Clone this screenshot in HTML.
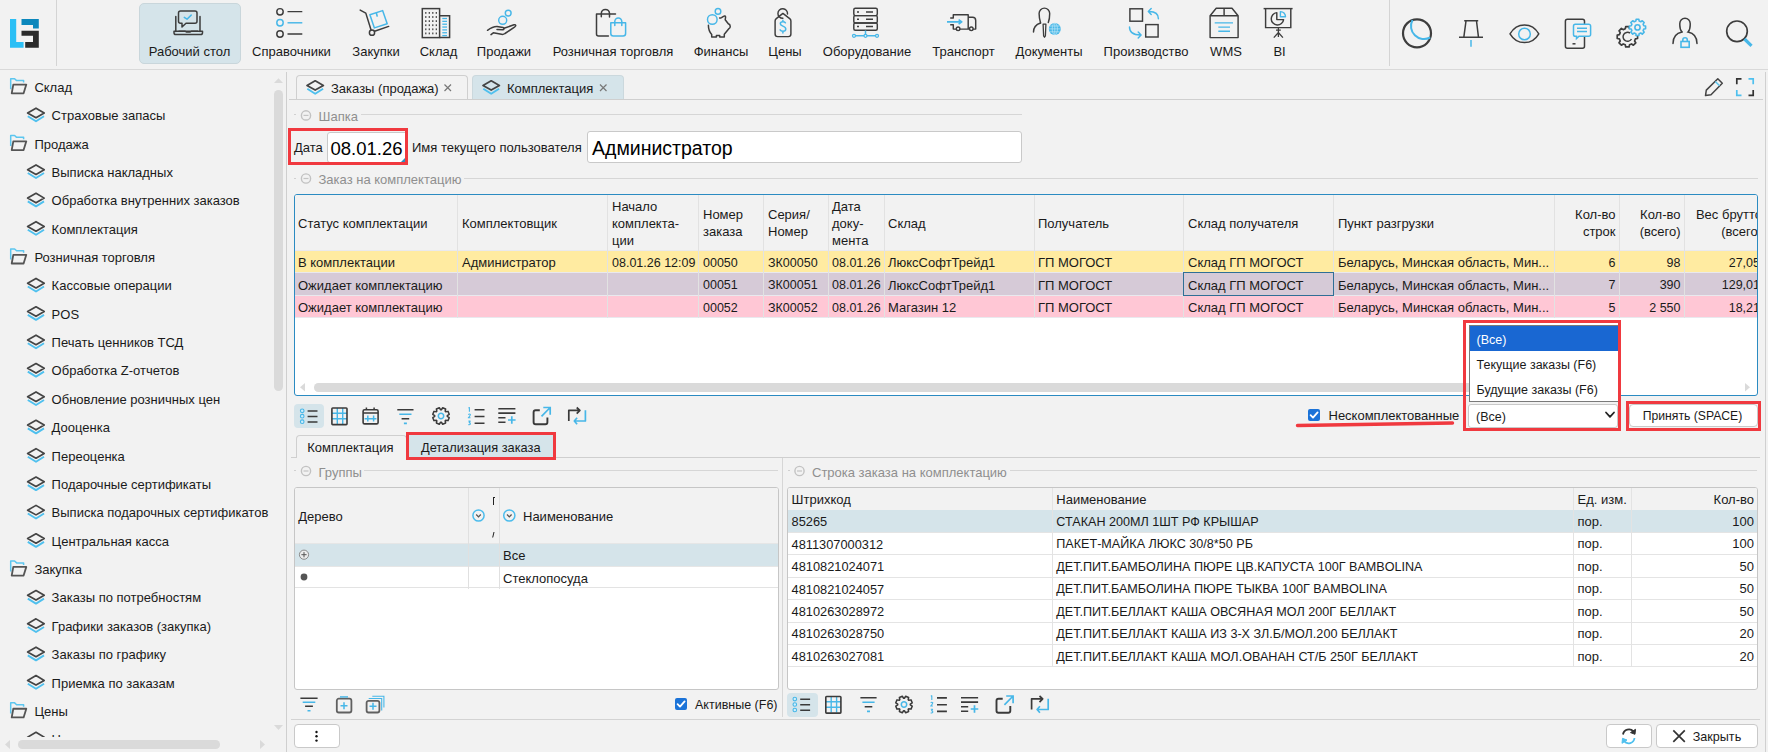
<!DOCTYPE html>
<html><head><meta charset="utf-8"><style>
html,body{margin:0;padding:0;}
body{width:1768px;height:752px;overflow:hidden;background:#f2f2f2;position:relative;font-family:"Liberation Sans", sans-serif;}
.t{position:absolute;white-space:nowrap;}
.b{position:absolute;box-sizing:border-box;}
svg.b{overflow:visible;}
</style></head><body>
<svg class="b" style="left:10px;top:19px" width="29" height="29" viewBox="0 0 29 29" fill="none">
<path d="M0 0H6.2V23H13.6V28.8H0Z" fill="#2bbff5"/>
<path d="M11.5 0H28.8V9.6H23V5.9H11.5Z" fill="#0b87bc"/>
<path d="M11.5 11.8H28.8V28.8H15.2V23H23V16.8H11.5Z" fill="#2b2b2b"/>
</svg>
<div class="b" style="left:56px;top:0px;width:1px;height:66px;background:#d4d4d4"></div>
<div class="b" style="left:1389px;top:0px;width:1px;height:66px;background:#d4d4d4"></div>
<div class="b" style="left:0px;top:69px;width:1768px;height:1px;background:#d9d9d9"></div>
<div class="b" style="left:139px;top:3px;width:102px;height:61px;background:#d5e4ea;border:1px solid #c9d6db;border-radius:5px"></div>
<div class="t" style="top:44.07px;font-size:13px;line-height:16.25px;color:#1a1a1a;left:109.5px;width:160px;text-align:center;">Рабочий стол</div>
<div class="t" style="top:44.07px;font-size:13px;line-height:16.25px;color:#1a1a1a;left:211.5px;width:160px;text-align:center;">Справочники</div>
<div class="t" style="top:44.07px;font-size:13px;line-height:16.25px;color:#1a1a1a;left:296.0px;width:160px;text-align:center;">Закупки</div>
<div class="t" style="top:44.07px;font-size:13px;line-height:16.25px;color:#1a1a1a;left:358.5px;width:160px;text-align:center;">Склад</div>
<div class="t" style="top:44.07px;font-size:13px;line-height:16.25px;color:#1a1a1a;left:424.0px;width:160px;text-align:center;">Продажи</div>
<div class="t" style="top:44.07px;font-size:13px;line-height:16.25px;color:#1a1a1a;left:533.0px;width:160px;text-align:center;">Розничная торговля</div>
<div class="t" style="top:44.07px;font-size:13px;line-height:16.25px;color:#1a1a1a;left:641.0px;width:160px;text-align:center;">Финансы</div>
<div class="t" style="top:44.07px;font-size:13px;line-height:16.25px;color:#1a1a1a;left:705.0px;width:160px;text-align:center;">Цены</div>
<div class="t" style="top:44.07px;font-size:13px;line-height:16.25px;color:#1a1a1a;left:787.0px;width:160px;text-align:center;">Оборудование</div>
<div class="t" style="top:44.07px;font-size:13px;line-height:16.25px;color:#1a1a1a;left:883.5px;width:160px;text-align:center;">Транспорт</div>
<div class="t" style="top:44.07px;font-size:13px;line-height:16.25px;color:#1a1a1a;left:969.0px;width:160px;text-align:center;">Документы</div>
<div class="t" style="top:44.07px;font-size:13px;line-height:16.25px;color:#1a1a1a;left:1066.0px;width:160px;text-align:center;">Производство</div>
<div class="t" style="top:44.07px;font-size:13px;line-height:16.25px;color:#1a1a1a;left:1146.0px;width:160px;text-align:center;">WMS</div>
<div class="t" style="top:44.07px;font-size:13px;line-height:16.25px;color:#1a1a1a;left:1199.6px;width:160px;text-align:center;">BI</div>
<svg class="b" style="left:0px;top:0px" width="1" height="1" viewBox="0 0 1 1" fill="none">
<path d="M175.8 16.5V31.5 M200 16.5V31.5" stroke="#3d3d3d" stroke-width="1.5" stroke-linecap="round" stroke-linejoin="round"/>
<path d="M174 31.2H202.5V32.8A1.8 1.8 0 0 1 200.7 34.6H175.8A1.8 1.8 0 0 1 174 32.8Z" stroke="#3d3d3d" stroke-width="1.5" stroke-linecap="round" stroke-linejoin="round"/>
<path d="M178.5 31.1H185L186.5 32H190L191.5 31.1H198" stroke="#3d3d3d" stroke-width="1.4"/>
<path d="M180.5 11H195A2 2 0 0 1 197 13V21.3A2 2 0 0 1 195 23.3H186L182 27V23.3H180.5A2 2 0 0 1 178.5 21.3V13A2 2 0 0 1 180.5 11Z" stroke="#3d3d3d" stroke-width="1.5" stroke-linecap="round" stroke-linejoin="round"/>
<path d="M184.3 17.4L187 19.2L191.2 15.1" stroke="#47b7e8" stroke-width="1.5" stroke-linecap="round" stroke-linejoin="round"/>
</svg>
<svg class="b" style="left:0px;top:0px" width="1" height="1" viewBox="0 0 1 1" fill="none">
<circle cx="280" cy="11.8" r="3.2" stroke="#3d3d3d" stroke-width="1.45"/>
<circle cx="280" cy="22.8" r="3.2" stroke="#47b7e8" stroke-width="1.45"/>
<circle cx="280" cy="34" r="3.2" stroke="#3d3d3d" stroke-width="1.45"/>
<path d="M287.5 11.6H302.3M287.5 34H302.3" stroke="#3d3d3d" stroke-width="1.45"/>
<path d="M287.5 22.8H302.3" stroke="#47b7e8" stroke-width="1.45"/>
</svg>
<svg class="b" style="left:0px;top:0px" width="1" height="1" viewBox="0 0 1 1" fill="none">
<path d="M360.2 10.1L365.8 13.1L371 29.8" stroke="#3d3d3d" stroke-width="1.5" stroke-linecap="round" stroke-linejoin="round"/>
<circle cx="372" cy="32.7" r="2.6" stroke="#3d3d3d" stroke-width="1.5"/>
<path d="M374.6 31.3L388.7 26.4" stroke="#3d3d3d" stroke-width="1.5" stroke-linecap="round" stroke-linejoin="round"/>
<path d="M369.9 14.7L382.6 10.6L387.2 23.8L374.4 27.9Z" stroke="#47b7e8" stroke-width="1.5" stroke-linejoin="round"/>
<path d="M376.3 12.7L377.3 16.6" stroke="#47b7e8" stroke-width="1.6"/>
</svg>
<svg class="b" style="left:0px;top:0px" width="1" height="1" viewBox="0 0 1 1" fill="none">
<rect x="422.3" y="8.6" width="17.3" height="29" stroke="#3d3d3d" stroke-width="1.5"/>
<path d="M439.6 15.7H449.6V37.6H439.6" stroke="#3d3d3d" stroke-width="1.5"/>
<rect x="425.2" y="12.0" width="1.2" height="1.8" fill="#3d3d3d"/><rect x="428.7" y="12.0" width="1.2" height="1.8" fill="#3d3d3d"/><rect x="432.2" y="12.0" width="1.2" height="1.8" fill="#3d3d3d"/><rect x="435.7" y="12.0" width="1.2" height="1.8" fill="#3d3d3d"/><rect x="425.2" y="16.1" width="1.2" height="1.8" fill="#3d3d3d"/><rect x="428.7" y="16.1" width="1.2" height="1.8" fill="#3d3d3d"/><rect x="432.2" y="16.1" width="1.2" height="1.8" fill="#3d3d3d"/><rect x="435.7" y="16.1" width="1.2" height="1.8" fill="#3d3d3d"/><rect x="425.2" y="20.2" width="1.2" height="1.8" fill="#3d3d3d"/><rect x="428.7" y="20.2" width="1.2" height="1.8" fill="#3d3d3d"/><rect x="432.2" y="20.2" width="1.2" height="1.8" fill="#3d3d3d"/><rect x="435.7" y="20.2" width="1.2" height="1.8" fill="#3d3d3d"/><rect x="425.2" y="24.3" width="1.2" height="1.8" fill="#3d3d3d"/><rect x="428.7" y="24.3" width="1.2" height="1.8" fill="#3d3d3d"/><rect x="432.2" y="24.3" width="1.2" height="1.8" fill="#3d3d3d"/><rect x="435.7" y="24.3" width="1.2" height="1.8" fill="#3d3d3d"/><rect x="425.2" y="28.4" width="1.2" height="1.8" fill="#3d3d3d"/><rect x="428.7" y="28.4" width="1.2" height="1.8" fill="#3d3d3d"/><rect x="432.2" y="28.4" width="1.2" height="1.8" fill="#3d3d3d"/><rect x="435.7" y="28.4" width="1.2" height="1.8" fill="#3d3d3d"/><rect x="425.2" y="32.5" width="1.2" height="1.8" fill="#3d3d3d"/><rect x="428.7" y="32.5" width="1.2" height="1.8" fill="#3d3d3d"/><rect x="432.2" y="32.5" width="1.2" height="1.8" fill="#3d3d3d"/><rect x="435.7" y="32.5" width="1.2" height="1.8" fill="#3d3d3d"/><path d="M442.3 18.50H447" stroke="#47b7e8" stroke-width="1.3"/><path d="M442.3 21.35H447" stroke="#47b7e8" stroke-width="1.3"/><path d="M442.3 24.20H447" stroke="#47b7e8" stroke-width="1.3"/><path d="M442.3 27.05H447" stroke="#47b7e8" stroke-width="1.3"/><path d="M442.3 29.90H447" stroke="#47b7e8" stroke-width="1.3"/><path d="M442.3 32.75H447" stroke="#47b7e8" stroke-width="1.3"/><path d="M442.3 35.60H447" stroke="#47b7e8" stroke-width="1.3"/>
</svg>
<svg class="b" style="left:0px;top:0px" width="1" height="1" viewBox="0 0 1 1" fill="none">
<circle cx="502.7" cy="20.3" r="4" stroke="#47b7e8" stroke-width="1.45"/>
<circle cx="508.2" cy="13.1" r="2.9" stroke="#47b7e8" stroke-width="1.45"/>
<path d="M487.5 30.3C490 28.5 493 26.5 497 26.6L503 27.5C504.5 28 504.3 29.8 502.6 29.8L497 29.5" stroke="#3d3d3d" stroke-width="1.5" stroke-linecap="round" stroke-linejoin="round"/>
<path d="M491 34.6L493.3 32.8L501.5 34.3C503 34.6 504 34.2 505 33.5L514.5 27.2C516.5 25.8 516 24.5 514 24.8L504 28.3" stroke="#3d3d3d" stroke-width="1.5" stroke-linecap="round" stroke-linejoin="round"/>
</svg>
<svg class="b" style="left:0px;top:0px" width="1" height="1" viewBox="0 0 1 1" fill="none">
<path d="M608.4 35.9H598.5A2 2 0 0 1 596.5 33.9V13.9H615.5" stroke="#3d3d3d" stroke-width="1.5" stroke-linecap="round" stroke-linejoin="round"/>
<path d="M601.3 16.8V13.5A4.1 4.1 0 0 1 609.5 13.5V17" stroke="#3d3d3d" stroke-width="1.5" stroke-linecap="round" stroke-linejoin="round"/>
<path d="M610.8 22.8H625.6V33.6A2.5 2.5 0 0 1 623.1 36.1H613.3A2.5 2.5 0 0 1 610.8 33.6Z" stroke="#47b7e8" stroke-width="1.5" stroke-linecap="round" stroke-linejoin="round"/>
<path d="M614.8 25.5V21.5A3.5 3.5 0 0 1 621.8 21.5V25.5" stroke="#47b7e8" stroke-width="1.5" stroke-linecap="round" stroke-linejoin="round"/>
</svg>
<svg class="b" style="left:0px;top:0px" width="1" height="1" viewBox="0 0 1 1" fill="none">
<circle cx="712.3" cy="19.5" r="4.8" stroke="#47b7e8" stroke-width="1.45"/>
<circle cx="718" cy="11.4" r="2.8" stroke="#47b7e8" stroke-width="1.45"/>
<path d="M708.4 25.2C708.4 29 709.5 32 711.7 34.5V37.1H716.4V35.5H719.7V37.1H724.3V34.3L728.8 28.8C730.8 28 730.8 24.5 728.3 23.8L725.2 19.8L725.6 17C725.5 16 724.5 15.8 723.5 16.3L721.5 17.6C720.8 18 720 18 719.6 18" stroke="#3d3d3d" stroke-width="1.5" stroke-linejoin="round" stroke-linecap="round"/>
</svg>
<svg class="b" style="left:0px;top:0px" width="1" height="1" viewBox="0 0 1 1" fill="none">
<path d="M782.9 13.4L776.3 18.6Q775.1 19.6 775.1 21V34A2.6 2.6 0 0 0 777.7 36.6H788.3A2.6 2.6 0 0 0 790.9 34V21Q790.9 19.6 789.7 18.6Z" stroke="#3d3d3d" stroke-width="1.45" stroke-linejoin="round"/>
<path d="M787.5 14A4.8 4.8 0 1 0 782.9 18.3" stroke="#3d3d3d" stroke-width="1.45" stroke-linecap="round"/>
<path d="M785.4 22.8C784.9 22 784 21.7 783 21.7C781.5 21.7 780.3 22.4 780.3 23.8C780.3 26.7 785.8 25.6 785.8 29C785.8 30.4 784.5 31.3 782.9 31.3C781.5 31.3 780.6 30.8 780.1 29.9M782.9 20.2V21.7M782.9 31.3V33" stroke="#47b7e8" stroke-width="1.5" stroke-linecap="round"/>
</svg>
<svg class="b" style="left:0px;top:0px" width="1" height="1" viewBox="0 0 1 1" fill="none">
<rect x="853.8" y="8.3" width="23.5" height="7.3" rx="1.5" stroke="#3d3d3d" stroke-width="1.45"/>
<rect x="853.8" y="15.6" width="23.5" height="7.3" rx="1.5" stroke="#3d3d3d" stroke-width="1.45"/>
<rect x="853.8" y="22.9" width="23.5" height="7.3" rx="1.5" stroke="#3d3d3d" stroke-width="1.45"/>
<path d="M857 12H859M857 19.3H859M857 26.6H859M866 12H873M866 19.3H873M866 26.6H873" stroke="#3d3d3d" stroke-width="1.5"/>
<path d="M865.5 30.5V35.8M855 35.8H876" stroke="#47b7e8" stroke-width="1.5"/>
<circle cx="854" cy="35.8" r="1.5" stroke="#47b7e8" stroke-width="1.3" fill="#f2f2f2"/>
<circle cx="865.5" cy="35.8" r="1.5" stroke="#47b7e8" stroke-width="1.3" fill="#f2f2f2"/>
<circle cx="877" cy="35.8" r="1.5" stroke="#47b7e8" stroke-width="1.3" fill="#f2f2f2"/>
</svg>
<svg class="b" style="left:0px;top:0px" width="1" height="1" viewBox="0 0 1 1" fill="none">
<path d="M950.2 17.9H953.3V14.8H968.2V29.1M950.2 24.8H953.3V29.1H956.3M960 29.1H969.5M973 29.1H975.7V20.4Q975.7 17.3 972.5 17.3H968.2" stroke="#3d3d3d" stroke-width="1.45" stroke-linejoin="round"/>
<circle cx="958.1" cy="28.8" r="1.8" stroke="#3d3d3d" stroke-width="1.4"/>
<circle cx="971.3" cy="28.8" r="1.8" stroke="#3d3d3d" stroke-width="1.4"/>
<path d="M947 21.9H961M958.6 19.6L961.8 21.9L958.6 24.2" stroke="#47b7e8" stroke-width="1.6" stroke-linejoin="round"/>
</svg>
<svg class="b" style="left:0px;top:0px" width="1" height="1" viewBox="0 0 1 1" fill="none">
<path d="M1040.6 23C1039.6 20 1039.1 17 1039.1 13.5A5.3 5.4 0 0 1 1049.7 13.5C1049.7 17 1049.3 20 1048.3 22.5" stroke="#3d3d3d" stroke-width="1.45" stroke-linecap="round"/>
<path d="M1040.5 23C1036 24.5 1033.5 27.5 1033.5 32" stroke="#3d3d3d" stroke-width="1.45" stroke-linecap="round"/>
<path d="M1043.1 24.2H1045.9L1045.4 35.8L1044.5 37.2L1043.6 35.8Z" stroke="#3d3d3d" stroke-width="1.3" stroke-linejoin="round"/>
<circle cx="1054.8" cy="28.9" r="6" fill="#47b7e8"/>
<path d="M1049 28.9H1060.6M1050 26H1059.6M1050 31.8H1059.6M1054.8 23V34.8" stroke="#bfe6f7" stroke-width="0.7"/>
<ellipse cx="1054.8" cy="28.9" rx="2.6" ry="5.9" stroke="#bfe6f7" stroke-width="0.7"/>
</svg>
<svg class="b" style="left:0px;top:0px" width="1" height="1" viewBox="0 0 1 1" fill="none">
<rect x="1129.9" y="8.8" width="12.6" height="12.4" stroke="#3d3d3d" stroke-width="1.45"/>
<rect x="1145.7" y="24.6" width="12.4" height="12.4" stroke="#3d3d3d" stroke-width="1.45"/>
<path d="M1158.4 18.8C1158.4 14 1155.5 11.5 1149.3 11.5M1151.2 8.6L1148.3 11.5L1151.2 14.4" stroke="#47b7e8" stroke-width="1.45" stroke-linecap="round" stroke-linejoin="round"/>
<path d="M1129.5 27C1129.5 32 1132.5 35 1140.3 35M1138.2 32.1L1141.1 35L1138.2 37.9" stroke="#47b7e8" stroke-width="1.45" stroke-linecap="round" stroke-linejoin="round"/>
</svg>
<svg class="b" style="left:0px;top:0px" width="1" height="1" viewBox="0 0 1 1" fill="none">
<path d="M1216.2 8.3H1232L1238.1 15.7V37.6H1210.1V15.7Z M1210.1 15.7H1238.1 M1224.1 8.3V15.7" stroke="#3d3d3d" stroke-width="1.45" stroke-linejoin="round"/>
<path d="M1214.7 22.9H1233M1218.3 27.1H1230M1218.3 31.2H1230" stroke="#47b7e8" stroke-width="1.4"/>
</svg>
<svg class="b" style="left:0px;top:0px" width="1" height="1" viewBox="0 0 1 1" fill="none">
<path d="M1263.6 8.6H1292.6" stroke="#3d3d3d" stroke-width="1.45"/>
<path d="M1265.6 8.6V27.6H1290.8V8.6" stroke="#3d3d3d" stroke-width="1.45"/>
<path d="M1278.4 28V37.1M1273.8 37.6L1278.4 32.5L1282.9 37.6M1276 30.2H1280.8" stroke="#3d3d3d" stroke-width="1.3"/>
<path d="M1276.8 12.6A6.2 6.2 0 1 0 1283.6 19.6H1276.8Z" stroke="#3d3d3d" stroke-width="1.45" stroke-linejoin="round"/>
<path d="M1280.4 11.6A5 5 0 0 1 1285.5 16.7H1280.4Z" stroke="#47b7e8" stroke-width="1.4" stroke-linejoin="round"/>
</svg>
<svg class="b" style="left:0px;top:0px" width="1" height="1" viewBox="0 0 1 1" fill="none">
<circle cx="1417" cy="33.3" r="14" stroke="#3d3d3d" stroke-width="2.2"/>
<path d="M1412.5 20A13 13 0 0 0 1430.2 37.5" stroke="#47b7e8" stroke-width="2"/>
</svg>
<svg class="b" style="left:0px;top:0px" width="1" height="1" viewBox="0 0 1 1" fill="none">
<path d="M1464.2 20.8H1478.2M1466 21L1463.8 37.3M1476.5 21L1478.5 37.3M1459 37.3H1483" stroke="#3d3d3d" stroke-width="1.5"/>
<path d="M1471 40V46.8" stroke="#47b7e8" stroke-width="1.5"/>
</svg>
<svg class="b" style="left:0px;top:0px" width="1" height="1" viewBox="0 0 1 1" fill="none">
<path d="M1510 33.8C1517 22 1532 22 1538.8 33.8C1532 45.5 1517 45.5 1510 33.8Z" stroke="#3d3d3d" stroke-width="1.5" stroke-linejoin="round"/>
<circle cx="1524.5" cy="34" r="5.8" stroke="#47b7e8" stroke-width="1.5"/>
</svg>
<svg class="b" style="left:0px;top:0px" width="1" height="1" viewBox="0 0 1 1" fill="none">
<rect x="1565.4" y="19.2" width="19.1" height="29" rx="2" stroke="#3d3d3d" stroke-width="1.5"/>
<path d="M1572.5 43.8H1575.5" stroke="#3d3d3d" stroke-width="1.5"/>
<path d="M1575.3 24.2H1588.8A1.8 1.8 0 0 1 1590.6 26V34.5A1.8 1.8 0 0 1 1588.8 36.3H1579L1576.5 38.6V36.3H1575.3A1.8 1.8 0 0 1 1573.5 34.5V26A1.8 1.8 0 0 1 1575.3 24.2Z" fill="#f2f2f2" stroke="#47b7e8" stroke-width="1.5"/>
<path d="M1577 28.2H1587M1577 31.5H1587" stroke="#47b7e8" stroke-width="1.4"/>
</svg>
<svg class="b" style="left:0px;top:0px" width="1" height="1" viewBox="0 0 1 1" fill="none"><polygon points="1637.56,35.11 1637.56,38.49 1635.42,38.93 1634.58,40.97 1635.78,42.79 1633.39,45.18 1631.57,43.98 1629.53,44.82 1629.09,46.96 1625.71,46.96 1625.27,44.82 1623.23,43.98 1621.41,45.18 1619.02,42.79 1620.22,40.97 1619.38,38.93 1617.24,38.49 1617.24,35.11 1619.38,34.67 1620.22,32.63 1619.02,30.81 1621.41,28.42 1623.23,29.62 1625.27,28.78 1625.71,26.64 1629.09,26.64 1629.53,28.78 1631.57,29.62 1633.39,28.42 1635.78,30.81 1634.58,32.63 1635.42,34.67" stroke="#3d3d3d" stroke-width="1.7" stroke-linejoin="round"/><path d="M1630 33A4.5 4.5 0 1 0 1631.5 39" stroke="#3d3d3d" stroke-width="1.5"/><circle cx="1637.5" cy="27.4" r="8.5" fill="#f2f2f2"/><polygon points="1645.59,26.05 1645.59,28.75 1643.78,29.07 1643.12,30.66 1644.17,32.17 1642.27,34.07 1640.76,33.02 1639.17,33.68 1638.85,35.49 1636.15,35.49 1635.83,33.68 1634.24,33.02 1632.73,34.07 1630.83,32.17 1631.88,30.66 1631.22,29.07 1629.41,28.75 1629.41,26.05 1631.22,25.73 1631.88,24.14 1630.83,22.63 1632.73,20.73 1634.24,21.78 1635.83,21.12 1636.15,19.31 1638.85,19.31 1639.17,21.12 1640.76,21.78 1642.27,20.73 1644.17,22.63 1643.12,24.14 1643.78,25.73" stroke="#47b7e8" stroke-width="1.6" stroke-linejoin="round"/><circle cx="1637.5" cy="27.4" r="2.6" stroke="#47b7e8" stroke-width="1.6"/></svg>
<svg class="b" style="left:0px;top:0px" width="1" height="1" viewBox="0 0 1 1" fill="none">
<path d="M1682 32C1680 30 1679.8 27 1679.8 25V23.5A5.2 5.2 0 0 1 1690.2 23.5V25C1690.2 27 1690 30 1688 32C1693 33 1697 35.5 1697 43.5" stroke="#3d3d3d" stroke-width="1.5" stroke-linecap="round"/>
<path d="M1682 32C1677 33 1673 35.5 1673 43.5" stroke="#3d3d3d" stroke-width="1.5" stroke-linecap="round"/>
<rect x="1681" y="41.5" width="8.2" height="5.8" stroke="#47b7e8" stroke-width="1.6"/>
<path d="M1682.8 41.5V40A2.2 2.2 0 0 1 1687.3 40V41.5" stroke="#47b7e8" stroke-width="1.6"/>
</svg>
<svg class="b" style="left:0px;top:0px" width="1" height="1" viewBox="0 0 1 1" fill="none">
<circle cx="1737" cy="31.3" r="10.3" stroke="#3d3d3d" stroke-width="1.7"/>
<path d="M1744.5 39L1751.5 45.8" stroke="#47b7e8" stroke-width="3.2"/>
</svg>
<div class="b" style="left:0;top:0;width:272px;height:737px;overflow:hidden">
<div class="t" style="top:79.77px;font-size:13px;line-height:16.25px;color:#1a1a1a;left:34.4px;">Склад</div>
<svg class="b" style="left:0px;top:0px" width="1" height="1" viewBox="0 0 1 1" fill="none"><g transform="translate(0,0.00)"><path d="M10.7 89.3V78.7H14.6L16.6 80.6H23.6V82.6" stroke="#5cc6ef" stroke-width="1.5" stroke-linejoin="round"/>
<path d="M13.3 84.6H26.3L23.6 93.3H11.7Z" stroke="#555" stroke-width="1.8" stroke-linejoin="round"/></g></svg>
<div class="t" style="top:108.14px;font-size:13px;line-height:16.25px;color:#1a1a1a;left:51.6px;">Страховые запасы</div>
<svg class="b" style="left:0px;top:0px" width="1" height="1" viewBox="0 0 1 1" fill="none"><g transform="translate(0,0.00)"><path d="M27.6 113L36 108.2L44.2 113L36 117.7Z" stroke="#444" stroke-width="1.7" stroke-linejoin="round"/>
<path d="M27.8 116.3L36 121.3L44 116.3" stroke="#4fc0ee" stroke-width="1.9" stroke-linejoin="round"/></g></svg>
<div class="t" style="top:136.51px;font-size:13px;line-height:16.25px;color:#1a1a1a;left:34.4px;">Продажа</div>
<svg class="b" style="left:0px;top:0px" width="1" height="1" viewBox="0 0 1 1" fill="none"><g transform="translate(0,56.74)"><path d="M10.7 89.3V78.7H14.6L16.6 80.6H23.6V82.6" stroke="#5cc6ef" stroke-width="1.5" stroke-linejoin="round"/>
<path d="M13.3 84.6H26.3L23.6 93.3H11.7Z" stroke="#555" stroke-width="1.8" stroke-linejoin="round"/></g></svg>
<div class="t" style="top:164.88px;font-size:13px;line-height:16.25px;color:#1a1a1a;left:51.6px;">Выписка накладных</div>
<svg class="b" style="left:0px;top:0px" width="1" height="1" viewBox="0 0 1 1" fill="none"><g transform="translate(0,56.74)"><path d="M27.6 113L36 108.2L44.2 113L36 117.7Z" stroke="#444" stroke-width="1.7" stroke-linejoin="round"/>
<path d="M27.8 116.3L36 121.3L44 116.3" stroke="#4fc0ee" stroke-width="1.9" stroke-linejoin="round"/></g></svg>
<div class="t" style="top:193.25px;font-size:13px;line-height:16.25px;color:#1a1a1a;left:51.6px;">Обработка внутренних заказов</div>
<svg class="b" style="left:0px;top:0px" width="1" height="1" viewBox="0 0 1 1" fill="none"><g transform="translate(0,85.11)"><path d="M27.6 113L36 108.2L44.2 113L36 117.7Z" stroke="#444" stroke-width="1.7" stroke-linejoin="round"/>
<path d="M27.8 116.3L36 121.3L44 116.3" stroke="#4fc0ee" stroke-width="1.9" stroke-linejoin="round"/></g></svg>
<div class="t" style="top:221.62px;font-size:13px;line-height:16.25px;color:#1a1a1a;left:51.6px;">Комплектация</div>
<svg class="b" style="left:0px;top:0px" width="1" height="1" viewBox="0 0 1 1" fill="none"><g transform="translate(0,113.48)"><path d="M27.6 113L36 108.2L44.2 113L36 117.7Z" stroke="#444" stroke-width="1.7" stroke-linejoin="round"/>
<path d="M27.8 116.3L36 121.3L44 116.3" stroke="#4fc0ee" stroke-width="1.9" stroke-linejoin="round"/></g></svg>
<div class="t" style="top:249.99px;font-size:13px;line-height:16.25px;color:#1a1a1a;left:34.4px;">Розничная торговля</div>
<svg class="b" style="left:0px;top:0px" width="1" height="1" viewBox="0 0 1 1" fill="none"><g transform="translate(0,170.22)"><path d="M10.7 89.3V78.7H14.6L16.6 80.6H23.6V82.6" stroke="#5cc6ef" stroke-width="1.5" stroke-linejoin="round"/>
<path d="M13.3 84.6H26.3L23.6 93.3H11.7Z" stroke="#555" stroke-width="1.8" stroke-linejoin="round"/></g></svg>
<div class="t" style="top:278.36px;font-size:13px;line-height:16.25px;color:#1a1a1a;left:51.6px;">Кассовые операции</div>
<svg class="b" style="left:0px;top:0px" width="1" height="1" viewBox="0 0 1 1" fill="none"><g transform="translate(0,170.22)"><path d="M27.6 113L36 108.2L44.2 113L36 117.7Z" stroke="#444" stroke-width="1.7" stroke-linejoin="round"/>
<path d="M27.8 116.3L36 121.3L44 116.3" stroke="#4fc0ee" stroke-width="1.9" stroke-linejoin="round"/></g></svg>
<div class="t" style="top:306.73px;font-size:13px;line-height:16.25px;color:#1a1a1a;left:51.6px;">POS</div>
<svg class="b" style="left:0px;top:0px" width="1" height="1" viewBox="0 0 1 1" fill="none"><g transform="translate(0,198.59)"><path d="M27.6 113L36 108.2L44.2 113L36 117.7Z" stroke="#444" stroke-width="1.7" stroke-linejoin="round"/>
<path d="M27.8 116.3L36 121.3L44 116.3" stroke="#4fc0ee" stroke-width="1.9" stroke-linejoin="round"/></g></svg>
<div class="t" style="top:335.10px;font-size:13px;line-height:16.25px;color:#1a1a1a;left:51.6px;">Печать ценников ТСД</div>
<svg class="b" style="left:0px;top:0px" width="1" height="1" viewBox="0 0 1 1" fill="none"><g transform="translate(0,226.96)"><path d="M27.6 113L36 108.2L44.2 113L36 117.7Z" stroke="#444" stroke-width="1.7" stroke-linejoin="round"/>
<path d="M27.8 116.3L36 121.3L44 116.3" stroke="#4fc0ee" stroke-width="1.9" stroke-linejoin="round"/></g></svg>
<div class="t" style="top:363.47px;font-size:13px;line-height:16.25px;color:#1a1a1a;left:51.6px;">Обработка Z-отчетов</div>
<svg class="b" style="left:0px;top:0px" width="1" height="1" viewBox="0 0 1 1" fill="none"><g transform="translate(0,255.33)"><path d="M27.6 113L36 108.2L44.2 113L36 117.7Z" stroke="#444" stroke-width="1.7" stroke-linejoin="round"/>
<path d="M27.8 116.3L36 121.3L44 116.3" stroke="#4fc0ee" stroke-width="1.9" stroke-linejoin="round"/></g></svg>
<div class="t" style="top:391.84px;font-size:13px;line-height:16.25px;color:#1a1a1a;left:51.6px;">Обновление розничных цен</div>
<svg class="b" style="left:0px;top:0px" width="1" height="1" viewBox="0 0 1 1" fill="none"><g transform="translate(0,283.70)"><path d="M27.6 113L36 108.2L44.2 113L36 117.7Z" stroke="#444" stroke-width="1.7" stroke-linejoin="round"/>
<path d="M27.8 116.3L36 121.3L44 116.3" stroke="#4fc0ee" stroke-width="1.9" stroke-linejoin="round"/></g></svg>
<div class="t" style="top:420.21px;font-size:13px;line-height:16.25px;color:#1a1a1a;left:51.6px;">Дооценка</div>
<svg class="b" style="left:0px;top:0px" width="1" height="1" viewBox="0 0 1 1" fill="none"><g transform="translate(0,312.07)"><path d="M27.6 113L36 108.2L44.2 113L36 117.7Z" stroke="#444" stroke-width="1.7" stroke-linejoin="round"/>
<path d="M27.8 116.3L36 121.3L44 116.3" stroke="#4fc0ee" stroke-width="1.9" stroke-linejoin="round"/></g></svg>
<div class="t" style="top:448.58px;font-size:13px;line-height:16.25px;color:#1a1a1a;left:51.6px;">Переоценка</div>
<svg class="b" style="left:0px;top:0px" width="1" height="1" viewBox="0 0 1 1" fill="none"><g transform="translate(0,340.44)"><path d="M27.6 113L36 108.2L44.2 113L36 117.7Z" stroke="#444" stroke-width="1.7" stroke-linejoin="round"/>
<path d="M27.8 116.3L36 121.3L44 116.3" stroke="#4fc0ee" stroke-width="1.9" stroke-linejoin="round"/></g></svg>
<div class="t" style="top:476.95px;font-size:13px;line-height:16.25px;color:#1a1a1a;left:51.6px;">Подарочные сертификаты</div>
<svg class="b" style="left:0px;top:0px" width="1" height="1" viewBox="0 0 1 1" fill="none"><g transform="translate(0,368.81)"><path d="M27.6 113L36 108.2L44.2 113L36 117.7Z" stroke="#444" stroke-width="1.7" stroke-linejoin="round"/>
<path d="M27.8 116.3L36 121.3L44 116.3" stroke="#4fc0ee" stroke-width="1.9" stroke-linejoin="round"/></g></svg>
<div class="t" style="top:505.32px;font-size:13px;line-height:16.25px;color:#1a1a1a;left:51.6px;">Выписка подарочных сертификатов</div>
<svg class="b" style="left:0px;top:0px" width="1" height="1" viewBox="0 0 1 1" fill="none"><g transform="translate(0,397.18)"><path d="M27.6 113L36 108.2L44.2 113L36 117.7Z" stroke="#444" stroke-width="1.7" stroke-linejoin="round"/>
<path d="M27.8 116.3L36 121.3L44 116.3" stroke="#4fc0ee" stroke-width="1.9" stroke-linejoin="round"/></g></svg>
<div class="t" style="top:533.69px;font-size:13px;line-height:16.25px;color:#1a1a1a;left:51.6px;">Центральная касса</div>
<svg class="b" style="left:0px;top:0px" width="1" height="1" viewBox="0 0 1 1" fill="none"><g transform="translate(0,425.55)"><path d="M27.6 113L36 108.2L44.2 113L36 117.7Z" stroke="#444" stroke-width="1.7" stroke-linejoin="round"/>
<path d="M27.8 116.3L36 121.3L44 116.3" stroke="#4fc0ee" stroke-width="1.9" stroke-linejoin="round"/></g></svg>
<div class="t" style="top:562.06px;font-size:13px;line-height:16.25px;color:#1a1a1a;left:34.4px;">Закупка</div>
<svg class="b" style="left:0px;top:0px" width="1" height="1" viewBox="0 0 1 1" fill="none"><g transform="translate(0,482.29)"><path d="M10.7 89.3V78.7H14.6L16.6 80.6H23.6V82.6" stroke="#5cc6ef" stroke-width="1.5" stroke-linejoin="round"/>
<path d="M13.3 84.6H26.3L23.6 93.3H11.7Z" stroke="#555" stroke-width="1.8" stroke-linejoin="round"/></g></svg>
<div class="t" style="top:590.43px;font-size:13px;line-height:16.25px;color:#1a1a1a;left:51.6px;">Заказы по потребностям</div>
<svg class="b" style="left:0px;top:0px" width="1" height="1" viewBox="0 0 1 1" fill="none"><g transform="translate(0,482.29)"><path d="M27.6 113L36 108.2L44.2 113L36 117.7Z" stroke="#444" stroke-width="1.7" stroke-linejoin="round"/>
<path d="M27.8 116.3L36 121.3L44 116.3" stroke="#4fc0ee" stroke-width="1.9" stroke-linejoin="round"/></g></svg>
<div class="t" style="top:618.80px;font-size:13px;line-height:16.25px;color:#1a1a1a;left:51.6px;">Графики заказов (закупка)</div>
<svg class="b" style="left:0px;top:0px" width="1" height="1" viewBox="0 0 1 1" fill="none"><g transform="translate(0,510.66)"><path d="M27.6 113L36 108.2L44.2 113L36 117.7Z" stroke="#444" stroke-width="1.7" stroke-linejoin="round"/>
<path d="M27.8 116.3L36 121.3L44 116.3" stroke="#4fc0ee" stroke-width="1.9" stroke-linejoin="round"/></g></svg>
<div class="t" style="top:647.17px;font-size:13px;line-height:16.25px;color:#1a1a1a;left:51.6px;">Заказы по графику</div>
<svg class="b" style="left:0px;top:0px" width="1" height="1" viewBox="0 0 1 1" fill="none"><g transform="translate(0,539.03)"><path d="M27.6 113L36 108.2L44.2 113L36 117.7Z" stroke="#444" stroke-width="1.7" stroke-linejoin="round"/>
<path d="M27.8 116.3L36 121.3L44 116.3" stroke="#4fc0ee" stroke-width="1.9" stroke-linejoin="round"/></g></svg>
<div class="t" style="top:675.54px;font-size:13px;line-height:16.25px;color:#1a1a1a;left:51.6px;">Приемка по заказам</div>
<svg class="b" style="left:0px;top:0px" width="1" height="1" viewBox="0 0 1 1" fill="none"><g transform="translate(0,567.40)"><path d="M27.6 113L36 108.2L44.2 113L36 117.7Z" stroke="#444" stroke-width="1.7" stroke-linejoin="round"/>
<path d="M27.8 116.3L36 121.3L44 116.3" stroke="#4fc0ee" stroke-width="1.9" stroke-linejoin="round"/></g></svg>
<div class="t" style="top:703.91px;font-size:13px;line-height:16.25px;color:#1a1a1a;left:34.4px;">Цены</div>
<svg class="b" style="left:0px;top:0px" width="1" height="1" viewBox="0 0 1 1" fill="none"><g transform="translate(0,624.14)"><path d="M10.7 89.3V78.7H14.6L16.6 80.6H23.6V82.6" stroke="#5cc6ef" stroke-width="1.5" stroke-linejoin="round"/>
<path d="M13.3 84.6H26.3L23.6 93.3H11.7Z" stroke="#555" stroke-width="1.8" stroke-linejoin="round"/></g></svg>
<div class="t" style="top:732.28px;font-size:13px;line-height:16.25px;color:#1a1a1a;left:51.6px;">Назначение цен</div>
<svg class="b" style="left:0px;top:0px" width="1" height="1" viewBox="0 0 1 1" fill="none"><g transform="translate(0,624.14)"><path d="M27.6 113L36 108.2L44.2 113L36 117.7Z" stroke="#444" stroke-width="1.7" stroke-linejoin="round"/>
<path d="M27.8 116.3L36 121.3L44 116.3" stroke="#4fc0ee" stroke-width="1.9" stroke-linejoin="round"/></g></svg>
</div>
<svg class="b" style="left:0px;top:0px" width="1" height="1" viewBox="0 0 1 1" fill="none"><path d="M274 83H283L278.5 78.3Z" fill="#dadada"/><path d="M274 725H283L278.5 730Z" fill="#dadada"/><path d="M10 740V749L5 744.5Z" fill="#dadada"/><path d="M260 740V749L265 744.5Z" fill="#dadada"/></svg>
<div class="b" style="left:274px;top:90px;width:9px;height:300.5px;background:#dadada;border-radius:4.5px"></div>
<div class="b" style="left:18px;top:740px;width:202px;height:8.6px;background:#dadada;border-radius:4.3px"></div>
<div class="b" style="left:286px;top:72px;width:1px;height:680px;background:#cfcfcf"></div>
<div class="b" style="left:1765px;top:72px;width:1px;height:680px;background:#d0d0d0"></div>
<div class="b" style="left:289px;top:99px;width:1474px;height:1px;background:#cfcfcf"></div>
<div class="b" style="left:295.5px;top:75px;width:172px;height:24px;border:1px solid #cfcfcf;border-bottom:none;border-radius:4px 4px 0 0;background:#f2f2f2"></div>
<div class="b" style="left:471.5px;top:75px;width:152px;height:24px;border:1px solid #cbd8dd;border-bottom:none;border-radius:4px 4px 0 0;background:#d5e4ea"></div>
<svg class="b" style="left:0px;top:0px" width="1" height="1" viewBox="0 0 1 1" fill="none"><g transform="translate(307,79.5)"><path d="M0 6L8.2 1.3L16.4 6L8.2 10.6Z" stroke="#444" stroke-width="1.7" stroke-linejoin="round"/>
<path d="M0.3 9.2L8.2 14.2L16.1 9.2" stroke="#4fc0ee" stroke-width="1.9" stroke-linejoin="round"/></g></svg>
<div class="t" style="top:80.87px;font-size:13px;line-height:16.25px;color:#1a1a1a;left:331px;">Заказы (продажа)</div>
<svg class="b" style="left:0px;top:0px" width="1" height="1" viewBox="0 0 1 1" fill="none"><path d="M444.5 84.5L451 91M451 84.5L444.5 91" stroke="#777" stroke-width="1.2"/></svg>
<svg class="b" style="left:0px;top:0px" width="1" height="1" viewBox="0 0 1 1" fill="none"><g transform="translate(483,79.5)"><path d="M0 6L8.2 1.3L16.4 6L8.2 10.6Z" stroke="#444" stroke-width="1.7" stroke-linejoin="round"/>
<path d="M0.3 9.2L8.2 14.2L16.1 9.2" stroke="#4fc0ee" stroke-width="1.9" stroke-linejoin="round"/></g></svg>
<div class="t" style="top:80.87px;font-size:13px;line-height:16.25px;color:#1a1a1a;left:507px;">Комплектация</div>
<svg class="b" style="left:0px;top:0px" width="1" height="1" viewBox="0 0 1 1" fill="none"><path d="M600 84.5L606.5 91M606.5 84.5L600 91" stroke="#777" stroke-width="1.2"/></svg>
<svg class="b" style="left:0px;top:0px" width="1" height="1" viewBox="0 0 1 1" fill="none"><path d="M1717.8 78.8L1722.3 83.3L1711 94.8L1705.5 95.6L1706.3 90.1Z" stroke="#444" stroke-width="1.5" stroke-linejoin="round"/>
<path d="M1715.3 81.5L1719.6 85.8" stroke="#5cc6ef" stroke-width="1.5"/></svg>
<svg class="b" style="left:0px;top:0px" width="1" height="1" viewBox="0 0 1 1" fill="none"><path d="M1736.8 84.2V78.8H1741.5M1753.2 90V95.3H1748.5" stroke="#333" stroke-width="1.7"/>
<path d="M1748.5 78.8H1753.2V84.2M1741.5 95.3H1736.8V90" stroke="#4fc0ee" stroke-width="1.7"/></svg>
<div class="b" style="left:294px;top:114px;width:2px;height:1px;background:#d0d0d0"></div>
<svg class="b" style="left:0px;top:0px" width="1" height="1" viewBox="0 0 1 1" fill="none"><circle cx="306" cy="115.4" r="4.6" stroke="#c2c2c2" stroke-width="1.4"/><path d="M303.5 115.4H308.5" stroke="#c4c4c4" stroke-width="1.2"/></svg>
<div class="t" style="top:109.27px;font-size:13px;line-height:16.25px;color:#8f8f8f;left:318.5px;">Шапка</div>
<div class="b" style="left:360.9px;top:114px;width:661.1px;height:1px;background:#d6d6d6"></div>
<div class="b" style="left:327px;top:132px;width:81px;height:31px;background:#fff;border:1px solid #c9c9c9;border-radius:3px"></div>
<svg class="b" style="left:0px;top:0px" width="1" height="1" viewBox="0 0 1 1" fill="none"><path d="M401 162H405V158Z" fill="#2a8fc0"/></svg>
<div class="t" style="top:139.87px;font-size:13px;line-height:16.25px;color:#1a1a1a;left:294px;">Дата</div>
<div class="t" style="top:137.03px;font-size:18.5px;line-height:23.12px;color:#000;left:330.5px;">08.01.26</div>
<div class="b" style="left:288px;top:128px;width:120px;height:37px;border:3px solid #f0393f"></div>
<div class="t" style="top:139.87px;font-size:13px;line-height:16.25px;color:#1a1a1a;left:412px;">Имя текущего пользователя</div>
<div class="b" style="left:587px;top:131px;width:435px;height:32px;background:#fff;border:1px solid #c9c9c9;border-radius:3px"></div>
<div class="t" style="top:136.05px;font-size:19.5px;line-height:24.38px;color:#000;left:592px;">Администратор</div>
<div class="b" style="left:294px;top:178px;width:2px;height:1px;background:#d0d0d0"></div>
<svg class="b" style="left:0px;top:0px" width="1" height="1" viewBox="0 0 1 1" fill="none"><circle cx="306" cy="178.5" r="4.6" stroke="#c2c2c2" stroke-width="1.4"/><path d="M303.5 178.5H308.5" stroke="#c4c4c4" stroke-width="1.2"/></svg>
<div class="t" style="top:172.37px;font-size:13px;line-height:16.25px;color:#8f8f8f;left:318.5px;">Заказ на комплектацию</div>
<div class="b" style="left:464.4px;top:178px;width:1293.6px;height:1px;background:#d6d6d6"></div>
<div class="b" style="left:294px;top:194px;width:1464px;height:202px;border:1px solid #2b8bc2;border-radius:3px;background:#fff;overflow:hidden">
<div class="b" style="left:0px;top:0px;width:1600px;height:55px;background:#f2f2f2"></div>
<div class="b" style="left:0px;top:56px;width:1600px;height:21px;background:#ffeba1"></div>
<div class="b" style="left:0px;top:78px;width:1600px;height:22px;background:#d6cad7"></div>
<div class="b" style="left:0px;top:101px;width:1600px;height:21px;background:#ffc7d5"></div>
<div class="b" style="left:0px;top:55px;width:1600px;height:1px;background:#e9e9ee"></div>
<div class="b" style="left:0px;top:77px;width:1600px;height:1px;background:#e9e9ee"></div>
<div class="b" style="left:0px;top:100px;width:1600px;height:1px;background:#e9e9ee"></div>
<div class="b" style="left:0px;top:122px;width:1600px;height:1px;background:#e9e9ee"></div>
<div class="b" style="left:162px;top:0px;width:1px;height:123px;background:#e2e2e2"></div>
<div class="b" style="left:312px;top:0px;width:1px;height:123px;background:#e2e2e2"></div>
<div class="b" style="left:403px;top:0px;width:1px;height:123px;background:#e2e2e2"></div>
<div class="b" style="left:468px;top:0px;width:1px;height:123px;background:#e2e2e2"></div>
<div class="b" style="left:533px;top:0px;width:1px;height:123px;background:#e2e2e2"></div>
<div class="b" style="left:589px;top:0px;width:1px;height:123px;background:#e2e2e2"></div>
<div class="b" style="left:739px;top:0px;width:1px;height:123px;background:#e2e2e2"></div>
<div class="b" style="left:888px;top:0px;width:1px;height:123px;background:#e2e2e2"></div>
<div class="b" style="left:1038px;top:0px;width:1px;height:123px;background:#e2e2e2"></div>
<div class="b" style="left:1259px;top:0px;width:1px;height:123px;background:#e2e2e2"></div>
<div class="b" style="left:1324px;top:0px;width:1px;height:123px;background:#e2e2e2"></div>
<div class="b" style="left:1389px;top:0px;width:1px;height:123px;background:#e2e2e2"></div>
<div class="t" style="top:20.87px;font-size:13px;line-height:16.25px;color:#1a1a1a;left:3px;">Статус комплектации</div>
<div class="t" style="top:20.87px;font-size:13px;line-height:16.25px;color:#1a1a1a;left:167px;">Комплектовщик</div>
<div class="t" style="top:3.87px;font-size:13px;line-height:16.25px;color:#1a1a1a;left:317px;">Начало</div>
<div class="t" style="top:20.87px;font-size:13px;line-height:16.25px;color:#1a1a1a;left:317px;">комплекта-</div>
<div class="t" style="top:37.87px;font-size:13px;line-height:16.25px;color:#1a1a1a;left:317px;">ции</div>
<div class="t" style="top:12.37px;font-size:13px;line-height:16.25px;color:#1a1a1a;left:408px;">Номер</div>
<div class="t" style="top:29.37px;font-size:13px;line-height:16.25px;color:#1a1a1a;left:408px;">заказа</div>
<div class="t" style="top:12.37px;font-size:13px;line-height:16.25px;color:#1a1a1a;left:473px;">Серия/</div>
<div class="t" style="top:29.37px;font-size:13px;line-height:16.25px;color:#1a1a1a;left:473px;">Номер</div>
<div class="t" style="top:3.87px;font-size:13px;line-height:16.25px;color:#1a1a1a;left:537px;">Дата</div>
<div class="t" style="top:20.87px;font-size:13px;line-height:16.25px;color:#1a1a1a;left:537px;">доку-</div>
<div class="t" style="top:37.87px;font-size:13px;line-height:16.25px;color:#1a1a1a;left:537px;">мента</div>
<div class="t" style="top:20.87px;font-size:13px;line-height:16.25px;color:#1a1a1a;left:593px;">Склад</div>
<div class="t" style="top:20.87px;font-size:13px;line-height:16.25px;color:#1a1a1a;left:743px;">Получатель</div>
<div class="t" style="top:20.87px;font-size:13px;line-height:16.25px;color:#1a1a1a;left:893px;">Склад получателя</div>
<div class="t" style="top:20.87px;font-size:13px;line-height:16.25px;color:#1a1a1a;left:1043px;">Пункт разгрузки</div>
<div class="t" style="top:12.37px;font-size:13px;line-height:16.25px;color:#1a1a1a;left:1120.5px;width:200px;text-align:right;">Кол-во</div>
<div class="t" style="top:29.37px;font-size:13px;line-height:16.25px;color:#1a1a1a;left:1120.5px;width:200px;text-align:right;">строк</div>
<div class="t" style="top:12.37px;font-size:13px;line-height:16.25px;color:#1a1a1a;left:1185.5px;width:200px;text-align:right;">Кол-во</div>
<div class="t" style="top:29.37px;font-size:13px;line-height:16.25px;color:#1a1a1a;left:1185.5px;width:200px;text-align:right;">(всего)</div>
<div class="t" style="top:12.37px;font-size:13px;line-height:16.25px;color:#1a1a1a;left:1267px;width:200px;text-align:right;">Вес брутто</div>
<div class="t" style="top:29.37px;font-size:13px;line-height:16.25px;color:#1a1a1a;left:1267px;width:200px;text-align:right;">(всего)</div>
<div class="t" style="top:60.17px;font-size:13px;line-height:16.25px;color:#1a1a1a;left:3px;">В комплектации</div>
<div class="t" style="top:60.17px;font-size:13px;line-height:16.25px;color:#1a1a1a;left:167px;">Администратор</div>
<div class="t" style="top:60.66px;font-size:12.5px;line-height:15.62px;color:#1a1a1a;left:317px;">08.01.26 12:09</div>
<div class="t" style="top:60.66px;font-size:12.5px;line-height:15.62px;color:#1a1a1a;left:408px;">00050</div>
<div class="t" style="top:60.66px;font-size:12.5px;line-height:15.62px;color:#1a1a1a;left:473px;">ЗК00050</div>
<div class="t" style="top:60.66px;font-size:12.5px;line-height:15.62px;color:#1a1a1a;left:537px;">08.01.26</div>
<div class="t" style="top:60.17px;font-size:13px;line-height:16.25px;color:#1a1a1a;left:593px;">ЛюксСофтТрейд1</div>
<div class="t" style="top:60.17px;font-size:13px;line-height:16.25px;color:#1a1a1a;left:743px;">ГП МОГОСТ</div>
<div class="t" style="top:60.17px;font-size:13px;line-height:16.25px;color:#1a1a1a;left:893px;">Склад ГП МОГОСТ</div>
<div class="t" style="top:60.17px;font-size:13px;line-height:16.25px;color:#1a1a1a;left:1043px;">Беларусь, Минская область, Мин...</div>
<div class="t" style="top:60.66px;font-size:12.5px;line-height:15.62px;color:#1a1a1a;left:1120.5px;width:200px;text-align:right;">6</div>
<div class="t" style="top:60.66px;font-size:12.5px;line-height:15.62px;color:#1a1a1a;left:1185.5px;width:200px;text-align:right;">98</div>
<div class="t" style="top:60.66px;font-size:12.5px;line-height:15.62px;color:#1a1a1a;left:1265px;width:200px;text-align:right;">27,05</div>
<div class="t" style="top:82.77px;font-size:13px;line-height:16.25px;color:#1a1a1a;left:3px;">Ожидает комплектацию</div>
<div class="t" style="top:83.26px;font-size:12.5px;line-height:15.62px;color:#1a1a1a;left:408px;">00051</div>
<div class="t" style="top:83.26px;font-size:12.5px;line-height:15.62px;color:#1a1a1a;left:473px;">ЗК00051</div>
<div class="t" style="top:83.26px;font-size:12.5px;line-height:15.62px;color:#1a1a1a;left:537px;">08.01.26</div>
<div class="t" style="top:82.77px;font-size:13px;line-height:16.25px;color:#1a1a1a;left:593px;">ЛюксСофтТрейд1</div>
<div class="t" style="top:82.77px;font-size:13px;line-height:16.25px;color:#1a1a1a;left:743px;">ГП МОГОСТ</div>
<div class="t" style="top:82.77px;font-size:13px;line-height:16.25px;color:#1a1a1a;left:893px;">Склад ГП МОГОСТ</div>
<div class="t" style="top:82.77px;font-size:13px;line-height:16.25px;color:#1a1a1a;left:1043px;">Беларусь, Минская область, Мин...</div>
<div class="t" style="top:83.26px;font-size:12.5px;line-height:15.62px;color:#1a1a1a;left:1120.5px;width:200px;text-align:right;">7</div>
<div class="t" style="top:83.26px;font-size:12.5px;line-height:15.62px;color:#1a1a1a;left:1185.5px;width:200px;text-align:right;">390</div>
<div class="t" style="top:83.26px;font-size:12.5px;line-height:15.62px;color:#1a1a1a;left:1265px;width:200px;text-align:right;">129,01</div>
<div class="t" style="top:105.37px;font-size:13px;line-height:16.25px;color:#1a1a1a;left:3px;">Ожидает комплектацию</div>
<div class="t" style="top:105.86px;font-size:12.5px;line-height:15.62px;color:#1a1a1a;left:408px;">00052</div>
<div class="t" style="top:105.86px;font-size:12.5px;line-height:15.62px;color:#1a1a1a;left:473px;">ЗК00052</div>
<div class="t" style="top:105.86px;font-size:12.5px;line-height:15.62px;color:#1a1a1a;left:537px;">08.01.26</div>
<div class="t" style="top:105.37px;font-size:13px;line-height:16.25px;color:#1a1a1a;left:593px;">Магазин 12</div>
<div class="t" style="top:105.37px;font-size:13px;line-height:16.25px;color:#1a1a1a;left:743px;">ГП МОГОСТ</div>
<div class="t" style="top:105.37px;font-size:13px;line-height:16.25px;color:#1a1a1a;left:893px;">Склад ГП МОГОСТ</div>
<div class="t" style="top:105.37px;font-size:13px;line-height:16.25px;color:#1a1a1a;left:1043px;">Беларусь, Минская область, Мин...</div>
<div class="t" style="top:105.86px;font-size:12.5px;line-height:15.62px;color:#1a1a1a;left:1120.5px;width:200px;text-align:right;">5</div>
<div class="t" style="top:105.86px;font-size:12.5px;line-height:15.62px;color:#1a1a1a;left:1185.5px;width:200px;text-align:right;">2 550</div>
<div class="t" style="top:105.86px;font-size:12.5px;line-height:15.62px;color:#1a1a1a;left:1265px;width:200px;text-align:right;">18,21</div>
<div class="b" style="left:888px;top:77px;width:151px;height:24px;border:1px solid #2f6f96"></div>
<div class="b" style="left:18.5px;top:188px;width:1200px;height:8.6px;background:#dadada;border-radius:4.3px"></div>
<svg class="b" style="left:0px;top:0px" width="1" height="1" viewBox="0 0 1 1" fill="none"><path d="M10 188V196.5L5 192.2Z" fill="#dadada"/><path d="M1450 188V196.5L1455 192.2Z" fill="#dadada"/></svg>
</div>
<div class="b" style="left:294px;top:404px;width:30px;height:23.5px;background:#d5e4ea;border-radius:4px"></div>
<svg class="b" style="left:0px;top:0px" width="1" height="1" viewBox="0 0 1 1" fill="none"><g transform="translate(309.8,416.2)"><circle cx="-7.6" cy="-5.4" r="1.8" fill="#cfeefb" stroke="#47b7e8" stroke-width="1.1"/><circle cx="-7.6" cy="0" r="1.8" fill="#cfeefb" stroke="#47b7e8" stroke-width="1.1"/><circle cx="-7.6" cy="5.5" r="1.8" fill="#cfeefb" stroke="#47b7e8" stroke-width="1.1"/><path d="M-2.2 -5.2H7.7M-2.2 0.3H7.7M-2.2 5.8H7.7" stroke="#3a3a3a" stroke-width="1.6"/></g><g transform="translate(339.5,416)"><path d="M-2.2 -8V8M3.2 -8V8M-7.6 -2.7H7.5M-7.6 2.7H7.5" stroke="#47b7e8" stroke-width="1.4"/><rect x="-7.6" y="-8" width="15.1" height="16.6" rx="0.8" stroke="#3a3a3a" stroke-width="1.6"/></g><g transform="translate(370.5,416.5)"><rect x="-7.4" y="-6.8" width="15" height="14.2" rx="1.5" stroke="#3a3a3a" stroke-width="1.6"/><path d="M-7.4 -3.6H7.6M-4.1 -9.1V-6.8M3.6 -9.1V-6.8" stroke="#3a3a3a" stroke-width="1.5"/><path d="M-5.9 2.2H5.9M-2.7 -0.9V5M3.1 -0.9V5" stroke="#47b7e8" stroke-width="1.5"/></g><g transform="translate(405.4,416.5)"><path d="M-8.1 -6.8H8.1M-3.8 2.2H3.8" stroke="#3a3a3a" stroke-width="1.6"/><path d="M-6.1 -2.3H6.1M-1.5 6.9H1.5" stroke="#47b7e8" stroke-width="1.6"/></g><g transform="translate(441,416)"><polygon points="8.23,1.69 7.01,4.62 4.73,4.17 4.17,4.73 4.62,7.01 1.69,8.23 0.39,6.29 -0.39,6.29 -1.69,8.23 -4.62,7.01 -4.17,4.73 -4.73,4.17 -7.01,4.62 -8.23,1.69 -6.29,0.39 -6.29,-0.39 -8.23,-1.69 -7.01,-4.62 -4.73,-4.17 -4.17,-4.73 -4.62,-7.01 -1.69,-8.23 -0.39,-6.29 0.39,-6.29 1.69,-8.23 4.62,-7.01 4.17,-4.73 4.73,-4.17 7.01,-4.62 8.23,-1.69 6.29,-0.39 6.29,0.39" stroke="#3a3a3a" stroke-width="1.5" stroke-linejoin="round"/><circle r="2.7" stroke="#47b7e8" stroke-width="1.5"/></g><g transform="translate(477,416.3)"><path d="M-2.4 -6.6H7.5M-2.4 0.2H7.5M-2.4 6.9H7.5" stroke="#3a3a3a" stroke-width="1.6"/><path d="M-8.6 -8.2L-7.6 -8.8V-4.6M-8.7 -1.6Q-7.6 -2.8 -6.6 -1.8Q-6.6 -0.8 -8.7 1.5H-6.5M-8.6 4.8H-6.8L-7.8 6.3Q-6.4 6.5 -6.7 7.9Q-7.5 8.8 -8.7 8.2" stroke="#47b7e8" stroke-width="1.1" stroke-linejoin="round"/></g><g transform="translate(507,415.5)"><path d="M-8.7 -6.8H8.4M-8.7 -2.4H8.4M-8.7 2.3H-1.5M-8.7 6.7H-1.5" stroke="#3a3a3a" stroke-width="1.6"/><path d="M1 4.5H8.6M4.8 0.7V8.3" stroke="#47b7e8" stroke-width="1.7"/></g><g transform="translate(542,416)"><path d="M-2.2 -5.7H-6.4A2 2 0 0 0 -8.4 -3.7V6.2A2 2 0 0 0 -6.4 8.2H3.4A2 2 0 0 0 5.4 6.2V1.4" stroke="#3a3a3a" stroke-width="1.9"/><path d="M-0.5 0.3L8.2 -8.5M1.3 -8.5H8.2V-1.3" stroke="#47b7e8" stroke-width="1.7"/></g><g transform="translate(577,416)"><path d="M-8.2 5V-5.7H3M-0.3 -8.5L2.9 -5.7L-0.3 -2.4" stroke="#3a3a3a" stroke-width="1.7" stroke-linejoin="round"/><path d="M8.4 -5.7V5H-2.7M0.1 1.8L-2.7 5L0.1 8.2" stroke="#47b7e8" stroke-width="1.7" stroke-linejoin="round"/></g></svg>
<div class="b" style="left:1308px;top:409px;width:12px;height:12px;background:#1b73d8;border-radius:2px"></div>
<svg class="b" style="left:0px;top:0px" width="1" height="1" viewBox="0 0 1 1" fill="none"><path d="M1310.6 415.2L1313 417.6L1317.6 412.4" stroke="#fff" stroke-width="1.8" stroke-linecap="round" stroke-linejoin="round"/></svg>
<div class="t" style="top:407.87px;font-size:13px;line-height:16.25px;color:#1a1a1a;left:1328.5px;">Нескомплектованные</div>
<svg class="b" style="left:0px;top:0px" width="1" height="1" viewBox="0 0 1 1" fill="none"><path d="M1297.5 425.5Q1375 424.5 1452.5 423" stroke="#f0393f" stroke-width="3.4" stroke-linecap="round"/></svg>
<div class="b" style="left:1467.5px;top:403.5px;width:150px;height:24px;background:#fff;border:1px solid #c9c9c9;border-radius:3px"></div>
<div class="t" style="top:409.86px;font-size:12.5px;line-height:15.62px;color:#1a1a1a;left:1476px;">(Все)</div>
<svg class="b" style="left:0px;top:0px" width="1" height="1" viewBox="0 0 1 1" fill="none"><path d="M1606 412.5L1610 416.8L1614 412.5" stroke="#222" stroke-width="1.8" stroke-linecap="round" stroke-linejoin="round"/></svg>
<div class="b" style="left:1468.5px;top:325px;width:152px;height:77px;background:#fff;border:1px solid #7a7a7a;border-right:none"></div>
<div class="b" style="left:1469.5px;top:326px;width:151px;height:24.5px;background:#1967d2"></div>
<div class="t" style="top:332.86px;font-size:12.5px;line-height:15.62px;color:#fff;left:1476.5px;">(Все)</div>
<div class="t" style="top:358.36px;font-size:12.5px;line-height:15.62px;color:#1a1a1a;left:1476.5px;">Текущие заказы (F6)</div>
<div class="t" style="top:383.36px;font-size:12.5px;line-height:15.62px;color:#1a1a1a;left:1476.5px;">Будущие заказы (F6)</div>
<div class="b" style="left:1463.3px;top:320.2px;width:157.7px;height:110.5px;border:3.2px solid #f0393f"></div>
<div class="b" style="left:1628.5px;top:404px;width:129.5px;height:23px;background:#fff;border:1px solid #c9c9c9;border-radius:4px"></div>
<div class="t" style="top:409.15px;font-size:12.2px;line-height:15.25px;color:#1a1a1a;left:1592.5px;width:200px;text-align:center;">Принять (SPACE)</div>
<div class="b" style="left:1626.2px;top:401.2px;width:134.6px;height:29.8px;border:3.2px solid #f0393f"></div>
<div class="b" style="left:291px;top:457px;width:1469px;height:1px;background:#cfcfcf"></div>
<div class="b" style="left:295.5px;top:435px;width:111px;height:22.5px;border:1px solid #cfcfcf;border-bottom:none;border-radius:4px 4px 0 0;background:#f2f2f2"></div>
<div class="t" style="top:440.37px;font-size:13px;line-height:16.25px;color:#1a1a1a;left:307.3px;">Комплектация</div>
<div class="b" style="left:409px;top:435px;width:144px;height:22px;background:#d5e4ea"></div>
<div class="t" style="top:439.56px;font-size:12.8px;line-height:16.0px;color:#1a1a1a;left:421px;">Детализация заказа</div>
<div class="b" style="left:406.4px;top:432.2px;width:149.6px;height:27.5px;border:3.2px solid #f0393f"></div>
<div class="b" style="left:782px;top:458px;width:1px;height:259px;background:#d6d6d6"></div>
<div class="b" style="left:294px;top:470px;width:2px;height:1px;background:#d0d0d0"></div>
<svg class="b" style="left:0px;top:0px" width="1" height="1" viewBox="0 0 1 1" fill="none"><circle cx="306" cy="471.0" r="4.6" stroke="#c2c2c2" stroke-width="1.4"/><path d="M303.5 471.0H308.5" stroke="#c4c4c4" stroke-width="1.2"/></svg>
<div class="t" style="top:464.87px;font-size:13px;line-height:16.25px;color:#8f8f8f;left:318.5px;">Группы</div>
<div class="b" style="left:363.5px;top:470px;width:414.5px;height:1px;background:#d6d6d6"></div>
<div class="b" style="left:787.5px;top:470px;width:2px;height:1px;background:#d0d0d0"></div>
<svg class="b" style="left:0px;top:0px" width="1" height="1" viewBox="0 0 1 1" fill="none"><circle cx="799.5" cy="471.0" r="4.6" stroke="#c2c2c2" stroke-width="1.4"/><path d="M797.0 471.0H802.0" stroke="#c4c4c4" stroke-width="1.2"/></svg>
<div class="t" style="top:464.87px;font-size:13px;line-height:16.25px;color:#8f8f8f;left:812.0px;">Строка заказа на комплектацию</div>
<div class="b" style="left:1009.9px;top:470px;width:747.1px;height:1px;background:#d6d6d6"></div>
<div class="b" style="left:294px;top:487px;width:485px;height:203px;border:1px solid #c6c6c6;border-radius:3px;background:#fff;overflow:hidden">
<div class="b" style="left:0px;top:0px;width:500px;height:55px;background:#f2f2f2"></div>
<div class="b" style="left:0px;top:55px;width:500px;height:1px;background:#e6e6e6"></div>
<div class="b" style="left:0px;top:56px;width:500px;height:22px;background:#d5e4ea"></div>
<div class="b" style="left:0px;top:99px;width:500px;height:1px;background:#e3e3e3"></div>
<div class="b" style="left:0px;top:78px;width:500px;height:1px;background:#e6e6e6"></div>
<div class="b" style="left:173.3px;top:0px;width:1px;height:100.5px;background:#e0e0e0"></div>
<div class="b" style="left:204.39999999999998px;top:0px;width:1px;height:100.5px;background:#e0e0e0"></div>
<div class="t" style="top:21.37px;font-size:13px;line-height:16.25px;color:#1a1a1a;left:3.1999999999999886px;">Дерево</div>
<svg class="b" style="left:0px;top:0px" width="1" height="1" viewBox="0 0 1 1" fill="none"><g transform="translate(183.5,27.5)"><circle r="5.6" stroke="#4cbcec" stroke-width="1.5"/><path d="M-2.3 -1L0 1.4L2.3 -1" stroke="#555" stroke-width="1.3"/></g><g transform="translate(214.3,27.5)"><circle r="5.6" stroke="#4cbcec" stroke-width="1.5"/><path d="M-2.3 -1L0 1.4L2.3 -1" stroke="#555" stroke-width="1.3"/></g><path d="M198.5 9V17M198.5 9.5H200M197.7 49.5L199 44" stroke="#222" stroke-width="1"/></svg>
<div class="t" style="top:21.37px;font-size:13px;line-height:16.25px;color:#1a1a1a;left:228px;">Наименование</div>
<div class="t" style="top:59.87px;font-size:13px;line-height:16.25px;color:#1a1a1a;left:208px;">Все</div>
<div class="t" style="top:83.37px;font-size:13px;line-height:16.25px;color:#1a1a1a;left:208px;">Стеклопосуда</div>
<svg class="b" style="left:0px;top:0px" width="1" height="1" viewBox="0 0 1 1" fill="none"><g transform="translate(9,66.70000000000005)"><circle r="4.6" fill="#ececec" stroke="#8a8a8a" stroke-width="1"/><path d="M-2.6 0H2.6M0 -2.6V2.6" stroke="#555" stroke-width="1"/></g><circle cx="9" cy="89" r="3.4" fill="#555"/></svg>
</div>
<div class="b" style="left:787px;top:487px;width:971px;height:203px;border:1px solid #c6c6c6;border-radius:3px;background:#fff;overflow:hidden">
<div class="b" style="left:0px;top:0px;width:1000px;height:22px;background:#f2f2f2"></div>
<div class="b" style="left:0px;top:22px;width:1000px;height:22px;background:#d5e4ea"></div>
<div class="b" style="left:0px;top:44px;width:1000px;height:1px;background:#e4e4e4"></div>
<div class="b" style="left:0px;top:66px;width:1000px;height:1px;background:#e4e4e4"></div>
<div class="b" style="left:0px;top:89px;width:1000px;height:1px;background:#e4e4e4"></div>
<div class="b" style="left:0px;top:111px;width:1000px;height:1px;background:#e4e4e4"></div>
<div class="b" style="left:0px;top:134px;width:1000px;height:1px;background:#e4e4e4"></div>
<div class="b" style="left:0px;top:156px;width:1000px;height:1px;background:#e4e4e4"></div>
<div class="b" style="left:0px;top:178px;width:1000px;height:1px;background:#e4e4e4"></div>
<div class="b" style="left:264px;top:0px;width:1px;height:178.5px;background:#e3e3e3"></div>
<div class="b" style="left:785px;top:0px;width:1px;height:178.5px;background:#e3e3e3"></div>
<div class="b" style="left:843px;top:0px;width:1px;height:178.5px;background:#e3e3e3"></div>
<div class="t" style="top:4.37px;font-size:13px;line-height:16.25px;color:#1a1a1a;left:3.6000000000000227px;">Штрихкод</div>
<div class="t" style="top:4.37px;font-size:13px;line-height:16.25px;color:#1a1a1a;left:268.29999999999995px;">Наименование</div>
<div class="t" style="top:4.37px;font-size:13px;line-height:16.25px;color:#1a1a1a;left:789.5px;">Ед. изм.</div>
<div class="t" style="top:4.37px;font-size:13px;line-height:16.25px;color:#1a1a1a;left:866px;width:100px;text-align:right;">Кол-во</div>
<div class="t" style="top:26.16px;font-size:12.8px;line-height:16.0px;color:#1a1a1a;left:3.6000000000000227px;">85265</div>
<div class="t" style="top:26.96px;font-size:12.6px;line-height:15.75px;color:#1a1a1a;left:268.29999999999995px;">СТАКАН 200МЛ 1ШТ РФ КРЫШАР</div>
<div class="t" style="top:25.97px;font-size:13px;line-height:16.25px;color:#1a1a1a;left:789.5px;">пор.</div>
<div class="t" style="top:25.97px;font-size:13px;line-height:16.25px;color:#1a1a1a;left:866px;width:100px;text-align:right;">100</div>
<div class="t" style="top:48.61px;font-size:12.8px;line-height:16.0px;color:#1a1a1a;left:3.6000000000000227px;">4811307000312</div>
<div class="t" style="top:49.41px;font-size:12.6px;line-height:15.75px;color:#1a1a1a;left:268.29999999999995px;">ПАКЕТ-МАЙКА ЛЮКС 30/8*50 РБ</div>
<div class="t" style="top:48.42px;font-size:13px;line-height:16.25px;color:#1a1a1a;left:789.5px;">пор.</div>
<div class="t" style="top:48.42px;font-size:13px;line-height:16.25px;color:#1a1a1a;left:866px;width:100px;text-align:right;">100</div>
<div class="t" style="top:71.06px;font-size:12.8px;line-height:16.0px;color:#1a1a1a;left:3.6000000000000227px;">4810821024071</div>
<div class="t" style="top:71.86px;font-size:12.6px;line-height:15.75px;color:#1a1a1a;left:268.29999999999995px;">ДЕТ.ПИТ.БАМБОЛИНА ПЮРЕ ЦВ.КАПУСТА 100Г BAMBOLINA</div>
<div class="t" style="top:70.87px;font-size:13px;line-height:16.25px;color:#1a1a1a;left:789.5px;">пор.</div>
<div class="t" style="top:70.87px;font-size:13px;line-height:16.25px;color:#1a1a1a;left:866px;width:100px;text-align:right;">50</div>
<div class="t" style="top:93.51px;font-size:12.8px;line-height:16.0px;color:#1a1a1a;left:3.6000000000000227px;">4810821024057</div>
<div class="t" style="top:94.31px;font-size:12.6px;line-height:15.75px;color:#1a1a1a;left:268.29999999999995px;">ДЕТ.ПИТ.БАМБОЛИНА ПЮРЕ ТЫКВА 100Г BAMBOLINA</div>
<div class="t" style="top:93.32px;font-size:13px;line-height:16.25px;color:#1a1a1a;left:789.5px;">пор.</div>
<div class="t" style="top:93.32px;font-size:13px;line-height:16.25px;color:#1a1a1a;left:866px;width:100px;text-align:right;">50</div>
<div class="t" style="top:115.96px;font-size:12.8px;line-height:16.0px;color:#1a1a1a;left:3.6000000000000227px;">4810263028972</div>
<div class="t" style="top:116.76px;font-size:12.6px;line-height:15.75px;color:#1a1a1a;left:268.29999999999995px;">ДЕТ.ПИТ.БЕЛЛАКТ КАША ОВСЯНАЯ МОЛ 200Г БЕЛЛАКТ</div>
<div class="t" style="top:115.77px;font-size:13px;line-height:16.25px;color:#1a1a1a;left:789.5px;">пор.</div>
<div class="t" style="top:115.77px;font-size:13px;line-height:16.25px;color:#1a1a1a;left:866px;width:100px;text-align:right;">50</div>
<div class="t" style="top:138.41px;font-size:12.8px;line-height:16.0px;color:#1a1a1a;left:3.6000000000000227px;">4810263028750</div>
<div class="t" style="top:139.21px;font-size:12.6px;line-height:15.75px;color:#1a1a1a;left:268.29999999999995px;">ДЕТ.ПИТ.БЕЛЛАКТ КАША ИЗ 3-Х ЗЛ.Б/МОЛ.200 БЕЛЛАКТ</div>
<div class="t" style="top:138.22px;font-size:13px;line-height:16.25px;color:#1a1a1a;left:789.5px;">пор.</div>
<div class="t" style="top:138.22px;font-size:13px;line-height:16.25px;color:#1a1a1a;left:866px;width:100px;text-align:right;">20</div>
<div class="t" style="top:160.86px;font-size:12.8px;line-height:16.0px;color:#1a1a1a;left:3.6000000000000227px;">4810263027081</div>
<div class="t" style="top:161.66px;font-size:12.6px;line-height:15.75px;color:#1a1a1a;left:268.29999999999995px;">ДЕТ.ПИТ.БЕЛЛАКТ КАША МОЛ.ОВАНАН СТ/Б 250Г БЕЛЛАКТ</div>
<div class="t" style="top:160.67px;font-size:13px;line-height:16.25px;color:#1a1a1a;left:789.5px;">пор.</div>
<div class="t" style="top:160.67px;font-size:13px;line-height:16.25px;color:#1a1a1a;left:866px;width:100px;text-align:right;">20</div>
</div>
<svg class="b" style="left:0px;top:0px" width="1" height="1" viewBox="0 0 1 1" fill="none"><g transform="translate(309,704.5)"><path d="M-8.6 -6.3H8.6M-3.9 1.8H3.9" stroke="#3a3a3a" stroke-width="1.6"/><path d="M-6.3 -2.2H6.3M-1.5 6.2H1.5" stroke="#47b7e8" stroke-width="1.6"/></g>
<g transform="translate(344,704.5)"><rect x="-7.2" y="-5.8" width="14.6" height="13.8" rx="2" stroke="#606060" stroke-width="1.8"/><path d="M-4 -7.6H4" stroke="#47b7e8" stroke-width="1.4"/><path d="M-3.5 1.3H3.5M0 -2.2V4.8" stroke="#47b7e8" stroke-width="1.5"/></g>
<g transform="translate(374,704.5)"><rect x="-7.4" y="-3.7" width="12.8" height="11.7" rx="2" stroke="#606060" stroke-width="1.8"/><path d="M-5.3 -6H7.7V6M-1.7 -8.3H9.9V3" stroke="#47b7e8" stroke-width="1.1"/><path d="M-4.5 1.7H2.5M-1 -1.8V5.2" stroke="#47b7e8" stroke-width="1.5"/></g>
</svg>
<div class="b" style="left:675px;top:698px;width:12px;height:12px;background:#1b73d8;border-radius:2px"></div>
<svg class="b" style="left:0px;top:0px" width="1" height="1" viewBox="0 0 1 1" fill="none"><path d="M677.6 704.2L680 706.6L684.6 701.4" stroke="#fff" stroke-width="1.8" stroke-linecap="round" stroke-linejoin="round"/></svg>
<div class="t" style="top:697.86px;font-size:12.5px;line-height:15.62px;color:#1a1a1a;left:695px;">Активные (F6)</div>
<div class="b" style="left:787px;top:693px;width:30.7px;height:23.8px;background:#d5e4ea;border-radius:4px"></div>
<svg class="b" style="left:0px;top:0px" width="1" height="1" viewBox="0 0 1 1" fill="none"><g transform="translate(802.4,704.5)"><circle cx="-7.6" cy="-5.4" r="1.8" fill="#cfeefb" stroke="#47b7e8" stroke-width="1.1"/><circle cx="-7.6" cy="0" r="1.8" fill="#cfeefb" stroke="#47b7e8" stroke-width="1.1"/><circle cx="-7.6" cy="5.5" r="1.8" fill="#cfeefb" stroke="#47b7e8" stroke-width="1.1"/><path d="M-2.2 -5.2H7.7M-2.2 0.3H7.7M-2.2 5.8H7.7" stroke="#3a3a3a" stroke-width="1.6"/></g><g transform="translate(833.4,704.5)"><path d="M-2.2 -8V8M3.2 -8V8M-7.6 -2.7H7.5M-7.6 2.7H7.5" stroke="#47b7e8" stroke-width="1.4"/><rect x="-7.6" y="-8" width="15.1" height="16.6" rx="0.8" stroke="#3a3a3a" stroke-width="1.6"/></g><g transform="translate(868.5,704.5)"><path d="M-8.1 -6.8H8.1M-3.8 2.2H3.8" stroke="#3a3a3a" stroke-width="1.6"/><path d="M-6.1 -2.3H6.1M-1.5 6.9H1.5" stroke="#47b7e8" stroke-width="1.6"/></g><g transform="translate(904,704.5)"><polygon points="8.23,1.69 7.01,4.62 4.73,4.17 4.17,4.73 4.62,7.01 1.69,8.23 0.39,6.29 -0.39,6.29 -1.69,8.23 -4.62,7.01 -4.17,4.73 -4.73,4.17 -7.01,4.62 -8.23,1.69 -6.29,0.39 -6.29,-0.39 -8.23,-1.69 -7.01,-4.62 -4.73,-4.17 -4.17,-4.73 -4.62,-7.01 -1.69,-8.23 -0.39,-6.29 0.39,-6.29 1.69,-8.23 4.62,-7.01 4.17,-4.73 4.73,-4.17 7.01,-4.62 8.23,-1.69 6.29,-0.39 6.29,0.39" stroke="#3a3a3a" stroke-width="1.5" stroke-linejoin="round"/><circle r="2.7" stroke="#47b7e8" stroke-width="1.5"/></g><g transform="translate(939.4,704.5)"><path d="M-2.4 -6.6H7.5M-2.4 0.2H7.5M-2.4 6.9H7.5" stroke="#3a3a3a" stroke-width="1.6"/><path d="M-8.6 -8.2L-7.6 -8.8V-4.6M-8.7 -1.6Q-7.6 -2.8 -6.6 -1.8Q-6.6 -0.8 -8.7 1.5H-6.5M-8.6 4.8H-6.8L-7.8 6.3Q-6.4 6.5 -6.7 7.9Q-7.5 8.8 -8.7 8.2" stroke="#47b7e8" stroke-width="1.1" stroke-linejoin="round"/></g><g transform="translate(969.7,704.5)"><path d="M-8.7 -6.8H8.4M-8.7 -2.4H8.4M-8.7 2.3H-1.5M-8.7 6.7H-1.5" stroke="#3a3a3a" stroke-width="1.6"/><path d="M1 4.5H8.6M4.8 0.7V8.3" stroke="#47b7e8" stroke-width="1.7"/></g><g transform="translate(1004.9,704.5)"><path d="M-2.2 -5.7H-6.4A2 2 0 0 0 -8.4 -3.7V6.2A2 2 0 0 0 -6.4 8.2H3.4A2 2 0 0 0 5.4 6.2V1.4" stroke="#3a3a3a" stroke-width="1.9"/><path d="M-0.5 0.3L8.2 -8.5M1.3 -8.5H8.2V-1.3" stroke="#47b7e8" stroke-width="1.7"/></g><g transform="translate(1039.8,704.5)"><path d="M-8.2 5V-5.7H3M-0.3 -8.5L2.9 -5.7L-0.3 -2.4" stroke="#3a3a3a" stroke-width="1.7" stroke-linejoin="round"/><path d="M8.4 -5.7V5H-2.7M0.1 1.8L-2.7 5L0.1 8.2" stroke="#47b7e8" stroke-width="1.7" stroke-linejoin="round"/></g></svg>
<div class="b" style="left:291px;top:719px;width:1469px;height:1px;background:#d3d3d3"></div>
<div class="b" style="left:294px;top:724px;width:46px;height:23.6px;background:#fff;border:1px solid #c9c9c9;border-radius:4px"></div>
<svg class="b" style="left:0px;top:0px" width="1" height="1" viewBox="0 0 1 1" fill="none"><circle cx="316.5" cy="732" r="1.2" fill="#111"/><circle cx="316.5" cy="736.3" r="1.2" fill="#111"/><circle cx="316.5" cy="740.6" r="1.2" fill="#111"/></svg>
<div class="b" style="left:1606px;top:724px;width:45.5px;height:23.6px;background:#fff;border:1px solid #c9c9c9;border-radius:4px"></div>
<svg class="b" style="left:0px;top:0px" width="1" height="1" viewBox="0 0 1 1" fill="none"><path d="M1623 734.5A6 6 0 0 1 1633.5 731.5" stroke="#333" stroke-width="1.8"/><path d="M1635.5 729.3L1635 734.3L1630.5 732.6Z" fill="#333" stroke="#333" stroke-width="1"/><path d="M1634.5 738A6 6 0 0 1 1624 741.2" stroke="#4fc0ee" stroke-width="1.8"/><path d="M1622 743.3L1622.5 738.3L1627 740Z" fill="#4fc0ee" stroke="#4fc0ee" stroke-width="1"/></svg>
<div class="b" style="left:1656px;top:724px;width:101.6px;height:23.6px;background:#fff;border:1px solid #c9c9c9;border-radius:4px"></div>
<svg class="b" style="left:0px;top:0px" width="1" height="1" viewBox="0 0 1 1" fill="none"><path d="M1673.3 730.3L1684.8 741.8M1684.8 730.3L1673.3 741.8" stroke="#333" stroke-width="1.7"/></svg>
<div class="t" style="top:729.76px;font-size:12.6px;line-height:15.75px;color:#1a1a1a;left:1692.7px;">Закрыть</div>
</body></html>
